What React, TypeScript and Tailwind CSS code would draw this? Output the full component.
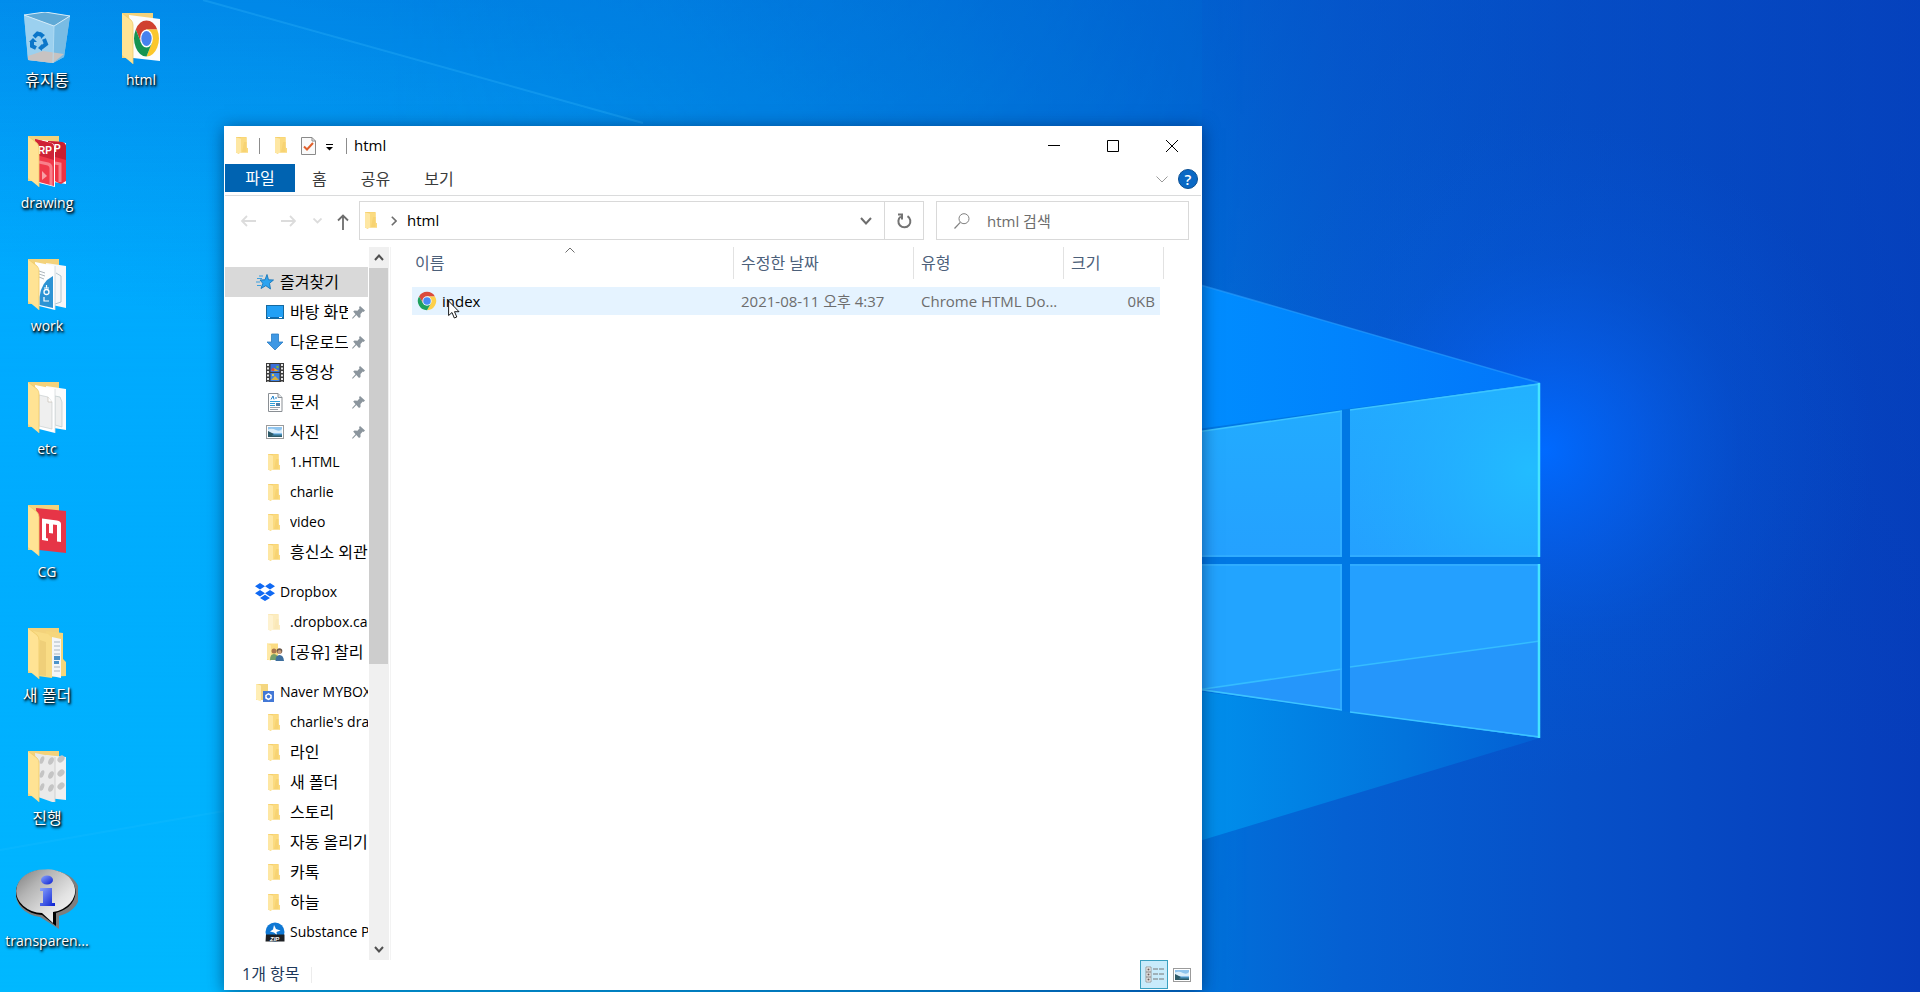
import React, { useState } from 'react';

type IconProps = { className?: string };

const Chrome: React.FC<IconProps> = ({ className }) => (
  <svg viewBox="0 0 24 24" className={className} aria-hidden="true">
    <path d="M2.47 6.5A11 11 0 0 1 21.53 6.5H12L7.24 14.75Z" fill="#db4a3c" />
    <path d="M21.53 6.5A11 11 0 0 1 12 23L16.76 14.75L12 6.5Z" fill="#fdd04a" />
    <path d="M12 23A11 11 0 0 1 2.47 6.5L7.24 14.75H16.76Z" fill="#1fa15d" />
    <circle cx="12" cy="12" r="5.6" fill="#f4f7fb" />
    <circle cx="12" cy="12" r="4.5" fill="#4a8af4" />
  </svg>
);

const Folder: React.FC<IconProps> = ({ className }) => (
  <svg viewBox="0 0 12 17" className={className} aria-hidden="true">
    <path d="M0 0H10.500V10.500L12 11.500V15.500H3V17L0 15.500Z" fill="#f6d06c" />
    <path d="M5 0.500H10.500V10.500L12 11.500V15.500H5Z" fill="#fbdb80" />
    <path d="M8 5H10.500V15H6Z" fill="#f7d373" />
    <path d="M0 0.500L5 1.500V15.500L3.500 15.700V17L0 15.500Z" fill="#fee7a3" />
  </svg>
);

const OpenFolder: React.FC<{ children?: React.ReactNode }> = ({ children }) => (
  <svg viewBox="0 0 39 52" className="h-[52px] w-[39px]" aria-hidden="true">
    <path d="M0 1H31V46H0Z" fill="#f3d27b" />
    {children}
    <path d="M0 1L9 8Q11 10 11 13V52L0 43Z" fill="#ffe394" />
    <path d="M0.400 1.400L9 8Q11 10 11 13V52" fill="none" stroke="#efca6b" strokeWidth="0.8" />
  </svg>
);

const HtmlFolder = () => (
  <OpenFolder>
    <path d="M7 3L38 7V49L11 46Z" fill="#fbfcfd" />
    <svg x="11" y="7" width="27" height="39" viewBox="0 0 24 24" preserveAspectRatio="none">
      <path d="M2.47 6.5A11 11 0 0 1 21.53 6.5H12L7.24 14.75Z" fill="#d0402f" />
      <path d="M21.53 6.5A11 11 0 0 1 12 23L16.76 14.75L12 6.5Z" fill="#fbc72b" />
      <path d="M12 23A11 11 0 0 1 2.47 6.5L7.24 14.75H16.76Z" fill="#169351" />
      <circle cx="12" cy="12" r="5.6" fill="#fff" />
      <circle cx="12" cy="12" r="4.6" fill="#4682ee" />
    </svg>
  </OpenFolder>
);

const DrawingFolder = () => (
  <OpenFolder>
    <path d="M14 5L38 8V49L20 46Z" fill="#fff" />
    <path d="M20 6L34 7Q38 8 38 12V46L33 49L22 44Z" fill="#ee3344" />
    <path d="M20 6L34 7Q38 8 38 12V25L20 20Z" fill="#c81f31" />
    <path d="M27 28L32 29V47" stroke="#f7808a" strokeWidth="3" fill="none" />
    <path d="M7 4L24 8Q27 9 27 13V52L11 48Z" fill="#fff" />
    <path d="M7 4L23 8Q26 9 26 13V51L11 47Z" fill="#f03a4b" />
    <path d="M7 4L23 8Q26 9 26 13V25L9 20Z" fill="#cf2236" />
    <path d="M11 27L20 29Q23 30 23 33V50" stroke="#f9808b" strokeWidth="3" fill="none" />
    <path d="M14 36L19 41L14 45Z" fill="#f9a0a8" />
    <text x="10" y="19" fontSize="10" fontWeight="700" fill="#fff" fontFamily="Liberation Sans, sans-serif">RP</text>
    <text x="26" y="17" fontSize="10" fontWeight="700" fill="#fff" fontFamily="Liberation Sans, sans-serif">P</text>
  </OpenFolder>
);

const WorkFolder = () => (
  <OpenFolder>
    <path d="M18 5L38 8V50L20 46Z" fill="#f6f7f8" />
    <path d="M28 15L33 18V44L27 46" fill="none" stroke="#9fb7c4" strokeWidth="0.8" />
    <path d="M7 4L27 8V52L11 48Z" fill="#fdfeff" />
    <path d="M27 8V52" stroke="#c9d4db" strokeWidth="0.8" />
    <path d="M11 13L17 15M11 16L17 18M11 19L16 21" stroke="#8b98a0" strokeWidth="0.7" />
    <path d="M25 18Q13 24 11.500 39V47L25 50Z" fill="#2c93d4" />
    <circle cx="18.500" cy="34" r="2.500" fill="none" stroke="#fff" strokeWidth="1.300" />
    <path d="M16 30H21M18.500 27V30M16 39V43H21" stroke="#fff" strokeWidth="1.200" fill="none" />
  </OpenFolder>
);

const EtcFolder = () => (
  <OpenFolder>
    <path d="M18 5L38 8V49L20 46Z" fill="#fafbfb" />
    <path d="M27 15L32 16L34 21V46L27 44Z" fill="#eeefef" stroke="#b9c7c9" strokeWidth="0.7" />
    <path d="M7 4L27 8V52L11 48Z" fill="#fff" />
    <path d="M11 14L20 16L24 21V48L11 45Z" fill="#efefef" stroke="#c9ced0" strokeWidth="0.7" />
    <path d="M20 16V21L24 21" fill="#fff" stroke="#c9c0b4" strokeWidth="0.7" />
    <path d="M27 8V52" stroke="#d5dadd" strokeWidth="0.8" />
  </OpenFolder>
);

const CgFolder = () => (
  <OpenFolder>
    <path d="M8 4L38 7V49L11 46Z" fill="#e63547" />
    <path d="M14 14.500L29 16.500Q33 17 33 20V38L29 37.500V21L25 20.500V29.500L21 29V20L18 19.500V34L20 34.500V37L14 36Z" fill="#fff" />
  </OpenFolder>
);

const NewFolder = () => (
  <OpenFolder>
    <path d="M18 4L35 6V32L38 35V49L20 50Z" fill="#f5d67b" />
    <path d="M24 10L33 12V51L24 49Z" fill="#f4f6f8" />
    <path d="M26 15H32M26 19H32M26 23H32M26 27H32M26 40H32M26 44H32" stroke="#a9b6c0" strokeWidth="1" />
    <path d="M26 29H32V33H26ZM26 34H31V37H26Z" fill="#4d93c9" />
    <path d="M5 4L20 7L24 11V51L10 49Z" fill="#f9dc85" />
    <path d="M12 13L18 15V49L11 48Z" fill="#efcf79" />
  </OpenFolder>
);

const ProgressFolder = () => (
  <OpenFolder>
    <path d="M18 5L38 7V50L20 48Z" fill="#f0f0f0" />
    <path d="M7 3L27 7V53L10 47Z" fill="#eaeaea" />
    <path d="M27 7V52" stroke="#c9c9c9" strokeWidth="0.8" />
    {[8, 22, 35].map(y => (
      <g key={y} fill="#c4c4c4">
        <ellipse cx="14" cy={y + 2} rx="2" ry="4" transform={`rotate(20 14 ${y + 2})`} />
        <ellipse cx="23" cy={y + 3} rx="2.500" ry="4" transform={`rotate(25 23 ${y + 3})`} />
        <ellipse cx="33" cy={y + 1} rx="3" ry="4" transform={`rotate(45 33 ${y + 1})`} />
      </g>
    ))}
  </OpenFolder>
);

const RecycleBin = () => (
  <svg viewBox="0 0 48 52" className="h-[52px] w-12" aria-hidden="true">
    <path d="M1 3L22 0L47 4L41 45L30 51L5 48Z" fill="#8ccaee" />
    <path d="M1 3L22 0L47 4L31 14Z" fill="#5fa9d6" />
    <path d="M1 3L31 14L30 51L5 48Z" fill="#9bd0ef" />
    <path d="M31 14L47 4L41 45L30 51Z" fill="#79bce4" />
    <path d="M5 44L20 39L41 42L30 51L5 48Z" fill="#c7c3c2" />
    <path d="M1 3L22 0L47 4L31 14Z" fill="none" stroke="#d4ebf8" strokeWidth="1" />
    <path d="M31 14L30 51" stroke="#b9e0f5" strokeWidth="0.8" />
    <g fill="none" stroke="#0b76c9" strokeWidth="4">
      <path d="M11 25L14.500 21.500L19 23" />
      <path d="M9 29V34L13 36" />
      <path d="M21 27L23 32L18 36" />
    </g>
    <path d="M17 20L22 23L18 27ZM6 30L10 26L14 30ZM19 32V39L15 36Z" fill="#0b76c9" />
  </svg>
);

const InfoBubble = () => (
  <svg viewBox="0 0 62 60" className="h-[60px] w-[62px]" aria-hidden="true">
    <defs>
      <linearGradient id="bubble" x1="0" y1="0" x2="1" y2="1">
        <stop offset="0" stopColor="#7c7c7c" />
        <stop offset="0.300" stopColor="#b4b4b4" />
        <stop offset="0.650" stopColor="#e2e2e2" />
        <stop offset="1" stopColor="#fff" />
      </linearGradient>
      <linearGradient id="info" x1="0" y1="0" x2="1" y2="1">
        <stop offset="0" stopColor="#8aa4ff" />
        <stop offset="1" stopColor="#0a1fd0" />
      </linearGradient>
    </defs>
    <path d="M32 2A28 23 0 0 1 43 47V60L24 48A28 23 0 0 1 32 2Z" fill="#7e7e7e" />
    <path d="M30 1A27.500 22 0 0 1 40 44V57L26 46A27.500 22 0 0 1 30 1Z" fill="#000" />
    <path d="M29 0.500A27 21.500 0 0 1 37 43V54L26 44A27 21.500 0 0 1 29 0.500Z" fill="url(#bubble)" />
    <ellipse cx="31" cy="11" rx="6" ry="4.500" fill="url(#info)" />
    <path d="M24 19H36V34H39V37H24V34H27V22H24Z" fill="url(#info)" />
  </svg>
);

const Star = () => (
  <svg viewBox="0 0 18 18" className="h-[18px] w-[18px]" aria-hidden="true">
    <path d="M11 1.500L12.500 6.800L17.500 7L13.500 10.300L14.500 16L9.800 12.700L5 15.500L6.800 10.300L4 7L9 6.800Z" fill="#2ba3f0" stroke="#1976b8" strokeWidth="0.9" />
    <path d="M1 5.500H6M0 9H4M1 12.500H5M3 3H7" stroke="#3b9fdf" strokeWidth="1" />
  </svg>
);

const Desktop = () => (
  <svg viewBox="0 0 18 14" className="h-[14px] w-[18px]" aria-hidden="true">
    <rect x="0.500" y="0.500" width="17" height="13" fill="#22a0f5" stroke="#16699f" />
    <path d="M1 12.500H17" stroke="#0e6bb0" />
    <path d="M2 12.500H4M13 12.500H16" stroke="#fff" />
  </svg>
);

const Download = () => (
  <svg viewBox="0 0 18 18" className="h-[18px] w-[18px]" aria-hidden="true">
    <path d="M5.500 1H12.500V9H17L9 17L1 9H5.500Z" fill="#3f98e4" stroke="#2a7cc4" strokeWidth="0.8" />
  </svg>
);

const Film = () => (
  <svg viewBox="0 0 18 19" className="h-[19px] w-[18px]" aria-hidden="true">
    <rect width="18" height="19" fill="#3b3b3b" />
    <path d="M2 1V19M16 1V19" stroke="#e8e8e8" strokeWidth="2" strokeDasharray="2 1.500" />
    <rect x="4.500" y="1" width="9" height="8" fill="#3a6fd8" />
    <rect x="4.500" y="10" width="9" height="8" fill="#3e83e4" />
    <path d="M5 8L8 5L13 8ZM5 17L9 13L13 17Z" fill="#d9b13a" />
    <circle cx="7" cy="6.500" r="1.500" fill="#d8463a" />
    <circle cx="11.500" cy="4" r="1.300" fill="#74b741" />
    <circle cx="7" cy="12" r="1.200" fill="#eac93c" />
  </svg>
);

const Document = () => (
  <svg viewBox="0 0 18 19" className="h-[19px] w-[18px]" aria-hidden="true">
    <path d="M2.500 0.500H12L16 4.500V18.500H2.500Z" fill="#fff" stroke="#8a8f94" />
    <path d="M12 0.500V4.500H16" fill="#dfe5ea" stroke="#8a8f94" />
    <path d="M5 6.500L7 3L8 6.500M9 5H11" stroke="#1c7fc9" fill="none" />
    <path d="M4 8.500H14M4 10.500H9M4 12.500H9" stroke="#2f9fd8" />
    <path d="M4 14.500H14M4 16.500H12" stroke="#9aa4ac" />
    <rect x="10" y="10" width="4" height="3" fill="#4d7ea8" />
  </svg>
);

const Picture: React.FC<IconProps> = ({ className = 'h-[14px] w-[18px]' }) => (
  <svg viewBox="0 0 18 14" className={className} aria-hidden="true">
    <rect x="0.500" y="0.500" width="17" height="13" fill="#fff" stroke="#9b9b9b" />
    <rect x="2" y="2" width="14" height="10" fill="#8fc4ee" />
    <path d="M2 4.500Q6 3 10 5T16 4V8H2Z" fill="#dceefb" />
    <path d="M2 6L8 9L16 9.500V12H2Z" fill="#2d5a68" />
    <path d="M8 9H16V10.500H6Z" fill="#4b8fb8" />
  </svg>
);

const Dropbox = () => (
  <svg viewBox="0 0 20 18" className="h-[18px] w-5" aria-hidden="true">
    <path d="M5 0L10 3.200L5 6.400L0 3.200ZM15 0L20 3.200L15 6.400L10 3.200ZM5 7L10 10.200L5 13.400L0 10.200ZM15 7L20 10.200L15 13.400L10 10.200ZM10 11.800L15 15L10 18L5 15Z" fill="#1069f3" />
  </svg>
);

const SharedFolder = () => (
  <svg viewBox="0 0 17 18" className="h-[18px] w-[17px]" aria-hidden="true">
    <path d="M0 0.500H11V17H0Z" fill="#fbdc83" />
    <path d="M0 0.500L4 2.500V18L0 16Z" fill="#ffe9a6" />
    <circle cx="7" cy="8" r="2.500" fill="#a9764d" />
    <path d="M3 17Q3 11 7 11T11 17Z" fill="#76a06a" />
    <circle cx="12.500" cy="8" r="2.800" fill="#6b5748" />
    <circle cx="12.500" cy="9" r="2" fill="#c79b7b" />
    <path d="M8.500 18Q8.500 12 12.500 12T17 18Z" fill="#3e6f9e" />
  </svg>
);

const NaverBox = () => (
  <svg viewBox="0 0 18 19" className="h-[19px] w-[18px]" aria-hidden="true">
    <path d="M0 1H12V17H0Z" fill="#f4d67f" />
    <path d="M0 1L5 2.500V18.500L0 16.500Z" fill="#ffeeb5" />
    <rect x="7" y="8" width="11" height="11" fill="#4378d6" />
    <path d="M12.500 10L15.800 12V15.500L12.500 17.300L9.200 15.500V12Z" fill="#fff" />
    <circle cx="12.500" cy="13.600" r="1.800" fill="#4378d6" />
  </svg>
);

const ZipBadge = () => (
  <svg viewBox="0 0 20 20" className="h-5 w-5" aria-hidden="true">
    <circle cx="10" cy="10" r="9.500" fill="#0f78d4" />
    <path d="M9 3L11 7L15.500 8.500L11.500 10L12 13L9 10.500L5 9.500L8 7.500Z" fill="#fff" />
    <path d="M1 12.500H19.500V19.500H0.500Z" fill="#1d2024" />
    <text x="5" y="18.500" fontSize="6" fontWeight="700" fontStyle="italic" fill="#fff" fontFamily="Liberation Sans, sans-serif">ZIP</text>
  </svg>
);

const Pin = () => (
  <svg viewBox="0 0 13 13" className="h-[13px] w-[13px]" aria-hidden="true">
    <path d="M8 0L13 4.500L11.500 6L10.800 5.500L8.500 8L8.500 11L7 12L4.300 9L1 12.500L0 12.600L0.300 11.800L3.500 8.200L1.200 5.500L2.500 4.500L5.500 4.800L7.600 2.300L7 1.300Z" fill="#8b959d" />
  </svg>
);

const Wallpaper = () => (
  <svg viewBox="0 0 1920 992" preserveAspectRatio="xMidYMid slice" className="absolute inset-0 h-full w-full" aria-hidden="true">
    <defs>
      <linearGradient id="sky" x1="0" y1="0" x2="1" y2="0">
        <stop offset="0" stopColor="#00abff" />
        <stop offset="0.150" stopColor="#00abfd" />
        <stop offset="0.350" stopColor="#009cf2" />
        <stop offset="0.500" stopColor="#0088e6" />
        <stop offset="0.620" stopColor="#0072db" />
        <stop offset="0.700" stopColor="#0560d2" />
        <stop offset="0.820" stopColor="#0650c8" />
        <stop offset="1" stopColor="#063cba" />
      </linearGradient>
      <linearGradient id="lift" x1="0" y1="0" x2="0" y2="1">
        <stop offset="0" stopColor="#0086e8" stopOpacity="0.350" />
        <stop offset="0.400" stopColor="#00b4ff" stopOpacity="0" />
        <stop offset="1" stopColor="#00beff" stopOpacity="0.700" />
      </linearGradient>
      <linearGradient id="fade" x1="0" y1="0" x2="1" y2="0">
        <stop offset="0" stopColor="#fff" />
        <stop offset="0.200" stopColor="#fff" />
        <stop offset="0.650" stopColor="#000" />
      </linearGradient>
      <mask id="leftSide">
        <rect width="1920" height="992" fill="url(#fade)" />
      </mask>
      <linearGradient id="topRight" x1="0.450" y1="0.500" x2="0.700" y2="0">
        <stop offset="0" stopColor="#0448c0" stopOpacity="0" />
        <stop offset="1" stopColor="#0448c0" stopOpacity="0.450" />
      </linearGradient>
      <radialGradient id="glow" gradientUnits="userSpaceOnUse" cx="1545" cy="450" r="330">
        <stop offset="0" stopColor="#006aff" />
        <stop offset="0.300" stopColor="#0561f0" stopOpacity="0.650" />
        <stop offset="0.600" stopColor="#055ae0" stopOpacity="0.250" />
        <stop offset="1" stopColor="#0458d8" stopOpacity="0" />
      </radialGradient>
      <linearGradient id="beamTop" gradientUnits="userSpaceOnUse" x1="1200" y1="0" x2="1540" y2="0">
        <stop offset="0" stopColor="#008dff" />
        <stop offset="1" stopColor="#0276fa" />
      </linearGradient>
      <linearGradient id="beamBottom" gradientUnits="userSpaceOnUse" x1="1200" y1="0" x2="1540" y2="0">
        <stop offset="0" stopColor="#008fec" />
        <stop offset="0.600" stopColor="#0274dc" />
        <stop offset="1" stopColor="#035fd4" />
      </linearGradient>
      <linearGradient id="pane" x1="0" y1="0" x2="0" y2="1">
        <stop offset="0" stopColor="#22abff" />
        <stop offset="1" stopColor="#24a1ff" />
      </linearGradient>
      <radialGradient id="shine" gradientUnits="userSpaceOnUse" cx="1530" cy="470" r="190">
        <stop offset="0" stopColor="#22bcff" />
        <stop offset="1" stopColor="#22aeff" stopOpacity="0" />
      </radialGradient>
    </defs>
    <rect width="1920" height="992" fill="url(#sky)" />
    <rect width="1920" height="992" fill="url(#lift)" mask="url(#leftSide)" />
    <rect width="1920" height="992" fill="url(#topRight)" />
    <path d="M203 0L643 123L1202 285V0Z" fill="#0080e0" opacity="0.100" />
    <path d="M203 0L643 123" stroke="#3cc0ff" strokeWidth="2" opacity="0.250" />
    <path d="M0 850L224 811" stroke="#3ccaff" strokeWidth="2" opacity="0.120" />
    <rect x="1200" y="100" width="720" height="700" fill="url(#glow)" />

    <path d="M1100 256L1540 383V560H1100Z" fill="url(#beamTop)" />
    <path d="M1100 871L1540 738V560H1100Z" fill="url(#beamBottom)" />
    <path d="M1100 256L1540 383" stroke="#2ba0ff" strokeWidth="1.500" opacity="0.600" />
    <path d="M1190 430L1540 383V738L1190 690Z" fill="#0078e4" />

    <path d="M1190 433L1342 411V557H1190Z" fill="url(#pane)" />
    <path d="M1350 410L1540 383V557H1350Z" fill="url(#pane)" />
    <path d="M1350 410L1540 383V557H1350Z" fill="url(#shine)" />
    <path d="M1190 564H1342V710L1190 688Z" fill="#22a4ff" />
    <path d="M1350 564H1540V738L1350 712Z" fill="#24a0ff" />
    <path d="M1190 691L1342 669V710L1190 689ZM1350 667L1540 641V738L1350 712Z" fill="#2596fb" />
    <path d="M1190 691L1342 669M1350 667L1540 641" stroke="#35bdff" strokeWidth="1.500" />
    <path d="M1190 433L1342 411M1350 410L1540 384M1190 688L1342 710M1350 712L1540 737" stroke="#3cc4ff" strokeWidth="1.500" />
    <path d="M1341 411V557M1341 564V710M1190 565H1342M1350 565H1540M1350 556H1540M1190 556H1342" stroke="#34b0ff" strokeWidth="1.500" />
    <path d="M1539 383V557M1539 564V738" stroke="#46e4ff" strokeWidth="2.500" />
  </svg>
);

const desktopColumns = [
  [
    { name: '휴지통', Icon: RecycleBin },
    { name: 'drawing', Icon: DrawingFolder },
    { name: 'work', Icon: WorkFolder },
    { name: 'etc', Icon: EtcFolder },
    { name: 'CG', Icon: CgFolder },
    { name: '새 폴더', Icon: NewFolder },
    { name: '진행', Icon: ProgressFolder },
    { name: 'transparen...', Icon: InfoBubble },
  ],
  [{ name: 'html', Icon: HtmlFolder }],
];

const SmallFolder = () => <Folder className="mr-[2px] h-[17px] w-3" />;
const HiddenFolder = () => <Folder className="mr-[2px] h-[17px] w-3 opacity-50" />;

type NavItem = { name: string; Icon: React.FC; pinned?: boolean };

const navGroups: { name: string; Icon: React.FC; items: NavItem[] }[] = [
  {
    name: '즐겨찾기',
    Icon: Star,
    items: [
      { name: '바탕 화면', Icon: Desktop, pinned: true },
      { name: '다운로드', Icon: Download, pinned: true },
      { name: '동영상', Icon: Film, pinned: true },
      { name: '문서', Icon: Document, pinned: true },
      { name: '사진', Icon: Picture, pinned: true },
      { name: '1.HTML', Icon: SmallFolder },
      { name: 'charlie', Icon: SmallFolder },
      { name: 'video', Icon: SmallFolder },
      { name: '흥신소 외관', Icon: SmallFolder },
    ],
  },
  {
    name: 'Dropbox',
    Icon: Dropbox,
    items: [
      { name: '.dropbox.cache', Icon: HiddenFolder },
      { name: '[공유] 찰리', Icon: SharedFolder },
    ],
  },
  {
    name: 'Naver MYBOX',
    Icon: NaverBox,
    items: [
      { name: "charlie's drawing", Icon: SmallFolder },
      { name: '라인', Icon: SmallFolder },
      { name: '새 폴더', Icon: SmallFolder },
      { name: '스토리', Icon: SmallFolder },
      { name: '자동 올리기', Icon: SmallFolder },
      { name: '카톡', Icon: SmallFolder },
      { name: '하늘', Icon: SmallFolder },
      { name: 'Substance Painter', Icon: ZipBadge },
    ],
  },
];

// Latin glyphs look larger than Hangul at the same size
const labelSize = (name: string) => (/[가-힣]/.test(name) ? 'text-base' : 'text-[14px]');

const TitleBar = () => (
  <header className="flex h-[37px] items-center">
    <div className="flex flex-1 items-center pl-[11px]">
      <Folder className="h-[17px] w-3" />
      <span className="ml-[11px] h-4 w-px bg-[#8c8c8c]" />
      <button type="button" aria-label="속성" className="ml-[15px]">
        <Folder className="h-[17px] w-3" />
      </button>
      <button type="button" aria-label="새 폴더" className="ml-[14px]">
        <svg viewBox="0 0 15 18" className="h-[18px] w-[15px]" aria-hidden="true">
          <path d="M0.500 0.500H11L14.500 4V17.500H0.500Z" fill="#fafafa" stroke="#8a8a8a" />
          <path d="M11 0.500V4H14.500" fill="none" stroke="#8a8a8a" />
          <path d="M3 9.500L6 12.500L12 6" fill="none" stroke="#e0602c" strokeWidth="2" />
        </svg>
      </button>
      <button type="button" aria-label="빠른 실행 도구 모음" className="mt-[3px] ml-[10px]">
        <svg viewBox="0 0 7 7" className="h-[7px] w-[7px]" aria-hidden="true">
          <path d="M0 0.500H7" stroke="#000" />
          <path d="M0 3H7L3.500 6.500Z" fill="#000" />
        </svg>
      </button>
      <span className="ml-[13px] h-4 w-px bg-[#8c8c8c]" />
      <h1 className="ml-[7px] pb-px text-[15px] leading-5 text-black">html</h1>
    </div>
    <button type="button" aria-label="최소화" className="flex h-full w-[59px] items-center justify-center">
      <svg viewBox="0 0 12 12" className="h-3 w-3" aria-hidden="true"><path d="M0 5.500H12" stroke="#000" /></svg>
    </button>
    <button type="button" aria-label="최대화" className="flex h-full w-[59px] items-center justify-center">
      <svg viewBox="0 0 12 12" className="h-3 w-3" aria-hidden="true"><path d="M0.500 0.500H11.500V11.500H0.500Z" fill="none" stroke="#000" /></svg>
    </button>
    <button type="button" aria-label="닫기" className="flex h-full w-[59px] items-center justify-center">
      <svg viewBox="0 0 12 12" className="h-3 w-3" aria-hidden="true"><path d="M0 0L12 12M12 0L0 12" stroke="#000" /></svg>
    </button>
  </header>
);

const Ribbon = () => (
  <div className="flex h-8 items-start border-b border-[#dadbdc] text-base text-[#3b3b3b]">
    <button type="button" className="h-7 w-[70px] bg-[#0063b1] leading-7 text-white">파일</button>
    {['홈', '공유', '보기'].map(tab => (
      <button key={tab} type="button" className="h-[30px] px-[17px] leading-[30px]">{tab}</button>
    ))}
    <div className="ml-auto flex h-[30px] items-center gap-[10px] pr-[3px]">
      <button type="button" aria-label="리본 확장">
        <svg viewBox="0 0 12 7" className="h-[7px] w-3" aria-hidden="true"><path d="M0.500 0.500L6 6L11.500 0.500" fill="none" stroke="#9a9a9a" /></svg>
      </button>
      <button type="button" aria-label="도움말" className="h-5 w-5 rounded-full border border-[#0b4f93] bg-[#0a68c4] text-center text-[15px] leading-[18px] font-semibold text-white">?</button>
    </div>
  </div>
);

const AddressRow: React.FC = () => {
  const [query, setQuery] = useState('');

  return (
    <div className="flex h-[51px] items-start pt-[5px] pr-3">
      <div className="flex h-[39px] w-[134px] shrink-0 items-center pl-4">
        <button type="button" aria-label="뒤로">
          <svg viewBox="0 0 16 12" className="h-3 w-4" aria-hidden="true"><path d="M15 6H1.500M6 1L1 6L6 11" fill="none" stroke="#dcdcdc" strokeWidth="1.800" /></svg>
        </button>
        <button type="button" aria-label="앞으로" className="ml-[23px]">
          <svg viewBox="0 0 16 12" className="h-3 w-4" aria-hidden="true"><path d="M1 6H14.500M10 1L15 6L10 11" fill="none" stroke="#dcdcdc" strokeWidth="1.800" /></svg>
        </button>
        <button type="button" aria-label="최근 위치" className="ml-[17px]">
          <svg viewBox="0 0 9 6" className="h-[6px] w-[9px]" aria-hidden="true"><path d="M0.500 0.500L4.500 4.500L8.500 0.500" fill="none" stroke="#dcdcdc" strokeWidth="1.800" /></svg>
        </button>
        <button type="button" aria-label="위로" className="mt-[3px] ml-[15px]">
          <svg viewBox="0 0 12 16" className="h-4 w-3" aria-hidden="true"><path d="M6 16V1.500M1 6.500L6 1.500L11 6.500" fill="none" stroke="#6d6d6d" strokeWidth="1.800" /></svg>
        </button>
      </div>
      <div className="flex h-[39px] min-w-0 flex-1 items-center border border-[#d9d9d9] pl-[5px]">
        <Folder className="h-[17px] w-3" />
        <svg viewBox="0 0 6 10" className="ml-[14px] h-[10px] w-[6px]" aria-hidden="true"><path d="M0.800 0.800L5 5L0.800 9.200" fill="none" stroke="#6d6d6d" strokeWidth="1.600" /></svg>
        <span className="ml-[10px] flex-1 pb-px text-[15px] leading-5 text-black">html</span>
        <button type="button" aria-label="이전 위치" className="mr-3">
          <svg viewBox="0 0 12 8" className="h-2 w-3" aria-hidden="true"><path d="M1 1L6 6.500L11 1" fill="none" stroke="#6d6d6d" strokeWidth="2" /></svg>
        </button>
        <button type="button" aria-label="새로 고침" className="flex h-full w-[39px] items-center justify-center border-l border-[#d9d9d9]">
          <svg viewBox="0 0 16 16" className="h-4 w-4" aria-hidden="true">
            <path d="M11.500 3.200A6 6 0 1 1 4.800 3.500" fill="none" stroke="#737373" strokeWidth="2" />
            <path d="M2 1.500H6V6.500" fill="none" stroke="#737373" strokeWidth="2" />
          </svg>
        </button>
      </div>
      <label className="ml-3 flex h-[39px] w-[253px] items-center border border-[#d9d9d9] pl-[17px]">
        <svg viewBox="0 0 16 16" className="h-4 w-4 shrink-0" aria-hidden="true">
          <circle cx="10" cy="5.700" r="5" fill="none" stroke="#808080" />
          <path d="M6.300 9.300L0.500 15.500" stroke="#808080" strokeWidth="1.200" />
        </svg>
        <input
          type="text"
          aria-label="html 검색"
          placeholder="html 검색"
          value={query}
          onChange={e => setQuery(e.target.value)}
          className="ml-[17px] w-full min-w-0 bg-transparent text-[15px] leading-6 outline-none placeholder:text-[#6d6d6d]"
        />
      </label>
    </div>
  );
};

const NavPane = () => (
  <div className="flex w-[166px] shrink-0 border-r border-[#f3f3f3]">
    <nav className="w-[143px] shrink-0 overflow-hidden pt-5 text-black">
      {navGroups.map((group, i) => (
        <div key={group.name} className={i === 0 ? '' : 'mt-[10px]'}>
          <a href="#" className={`flex h-[30px] items-center pl-[30px] ${i === 0 ? 'bg-[#d9d9d9]' : ''}`}>
            <span className="flex w-5 shrink-0 items-center justify-center"><group.Icon /></span>
            <span className={`ml-[5px] flex-1 overflow-hidden leading-[30px] whitespace-nowrap ${labelSize(group.name)}`}>{group.name}</span>
          </a>
          <ul>
            {group.items.map(({ name, Icon, pinned }) => (
              <li key={name}>
                <a href="#" className="flex h-[30px] items-center pl-10">
                  <span className="flex w-5 shrink-0 items-center justify-center"><Icon /></span>
                  <span className={`ml-[5px] flex-1 overflow-hidden leading-[30px] whitespace-nowrap ${labelSize(name)}`}>{name}</span>
                  {pinned && <span className="flex w-5 shrink-0 items-center justify-center"><Pin /></span>}
                </a>
              </li>
            ))}
          </ul>
        </div>
      ))}
    </nav>
    <div className="ml-px flex w-5 flex-col bg-[#f0f0f0]">
      <button type="button" aria-label="위로 스크롤" className="flex h-[21px] items-center justify-center">
        <svg viewBox="0 0 10 7" className="h-[7px] w-[10px]" aria-hidden="true"><path d="M1 6L5 1.500L9 6" fill="none" stroke="#505050" strokeWidth="2" /></svg>
      </button>
      <div className="mr-px flex-1">
        <div className="h-[59%] bg-[#cdcdcd]" />
      </div>
      <button type="button" aria-label="아래로 스크롤" className="flex h-[21px] items-center justify-center">
        <svg viewBox="0 0 10 7" className="h-[7px] w-[10px]" aria-hidden="true"><path d="M1 1L5 5.500L9 1" fill="none" stroke="#505050" strokeWidth="2" /></svg>
      </button>
    </div>
  </div>
);

const FileList = () => (
  <div className="min-w-0 flex-1 pl-[21px]">
    <table className="w-[752px] table-fixed border-separate border-spacing-0 text-left">
      <colgroup>
        <col className="w-[322px]" />
        <col className="w-[180px]" />
        <col className="w-[150px]" />
        <col className="w-[100px]" />
      </colgroup>
      <thead className="text-base leading-8 text-[#4c607a]">
        <tr className="h-8">
          <th scope="col" className="relative border-r border-[#e2e2e2] p-0 pl-[3px] font-normal">
            이름
            <svg viewBox="0 0 10 6" className="absolute top-0 left-1/2 h-[6px] w-[10px] -translate-x-2" aria-hidden="true"><path d="M0.500 5.500L5 1L9.500 5.500" fill="none" stroke="#6d6d6d" /></svg>
          </th>
          <th scope="col" className="border-r border-[#e2e2e2] p-0 pl-[7px] font-normal">수정한 날짜</th>
          <th scope="col" className="border-r border-[#e2e2e2] p-0 pl-[7px] font-normal">유형</th>
          <th scope="col" className="border-r border-[#e2e2e2] p-0 pl-[7px] font-normal">크기</th>
        </tr>
      </thead>
      <tbody className="text-[15px] leading-7 text-[#6d6d6d]">
        <tr className="h-2"><td colSpan={4} className="p-0" /></tr>
        <tr className="h-7">
          <td className="bg-[#e5f3ff] p-0 pl-[5px] text-black">
            <a href="#" className="flex items-center">
              <Chrome className="h-5 w-5" />
              <span className="ml-[5px]">index</span>
            </a>
          </td>
          <td className="bg-[#e5f3ff] p-0 pl-[7px] whitespace-nowrap">2021-08-11 오후 4:37</td>
          <td className="bg-[#e5f3ff] p-0 pl-[7px] whitespace-nowrap">Chrome HTML Do...</td>
          <td className="border-r-4 border-white bg-[#e5f3ff] p-0 pr-[5px] text-right">0KB</td>
        </tr>
      </tbody>
    </table>
  </div>
);

const StatusBar = () => (
  <footer className="flex h-[29px] items-center pr-[10px] pl-[17px]">
    <span className="pb-[2px] text-base leading-[26px] text-[#1e395b]">1개 항목</span>
    <span className="ml-3 h-4 w-px bg-[#ececec]" />
    <div className="ml-auto flex items-center gap-[5px]">
      <button type="button" aria-label="자세히" className="flex h-[29px] w-7 items-center justify-center border border-[#3aa0c0] bg-[#c8ebfb]">
        <svg viewBox="0 0 19 17" className="h-[17px] w-[19px]" aria-hidden="true">
          <path d="M1 1H6V6H1ZM1 6H6V11H1ZM1 11H6V16H1Z" fill="#fff" stroke="#9a9a9a" />
          <path d="M2.500 3.500H4.500M2.500 8.500H4.500M2.500 13.500H4.500" stroke="#6b5a55" strokeWidth="2" />
          <path d="M8 3H13M14 3H19M8 8H13M14 8H19M8 13H13M14 13H19" stroke="#777" />
        </svg>
      </button>
      <button type="button" aria-label="큰 아이콘"><Picture /></button>
    </div>
  </footer>
);

const ExplorerWindow = () => (
  <section
    aria-label="html"
    className="absolute top-[126px] left-[224px] flex h-[calc(100vh-128px)] min-h-[640px] w-[978px] flex-col bg-white p-px shadow-[0_2px_16px_rgba(0,20,60,0.55)]"
  >
    <TitleBar />
    <Ribbon />
    <AddressRow />
    <div className="flex min-h-0 flex-1">
      <NavPane />
      <FileList />
    </div>
    <StatusBar />
  </section>
);

const App: React.FC = () => (
  <main className="relative min-h-screen overflow-hidden bg-[#00abff] font-['Open_Sans','Noto_Sans_CJK_KR',sans-serif]">
    <Wallpaper />

    <div className="relative flex">
      {desktopColumns.map((column, i) => (
        <ul key={i} className="w-[94px]">
          {column.map(({ name, Icon }) => (
            <li key={name} className="h-[123px]">
              <a href="#" className="flex flex-col items-center">
                <span className="flex h-[68px] items-center justify-center pt-[7px]"><Icon /></span>
                <span className={`leading-6 text-white [text-shadow:1px_1px_2px_#000,1px_2px_3px_#000] ${labelSize(name)}`}>{name}</span>
              </a>
            </li>
          ))}
        </ul>
      ))}
    </div>

    <ExplorerWindow />

    <svg viewBox="0 0 12 19" className="pointer-events-none absolute top-[300px] left-[448px] h-[19px] w-3" aria-hidden="true">
      <path d="M0.600 1V15.500L4 12.500L6.300 18L8.800 17L6.500 11.700H11Z" fill="#fff" stroke="#000" strokeWidth="0.9" />
    </svg>
  </main>
);

export default App;
